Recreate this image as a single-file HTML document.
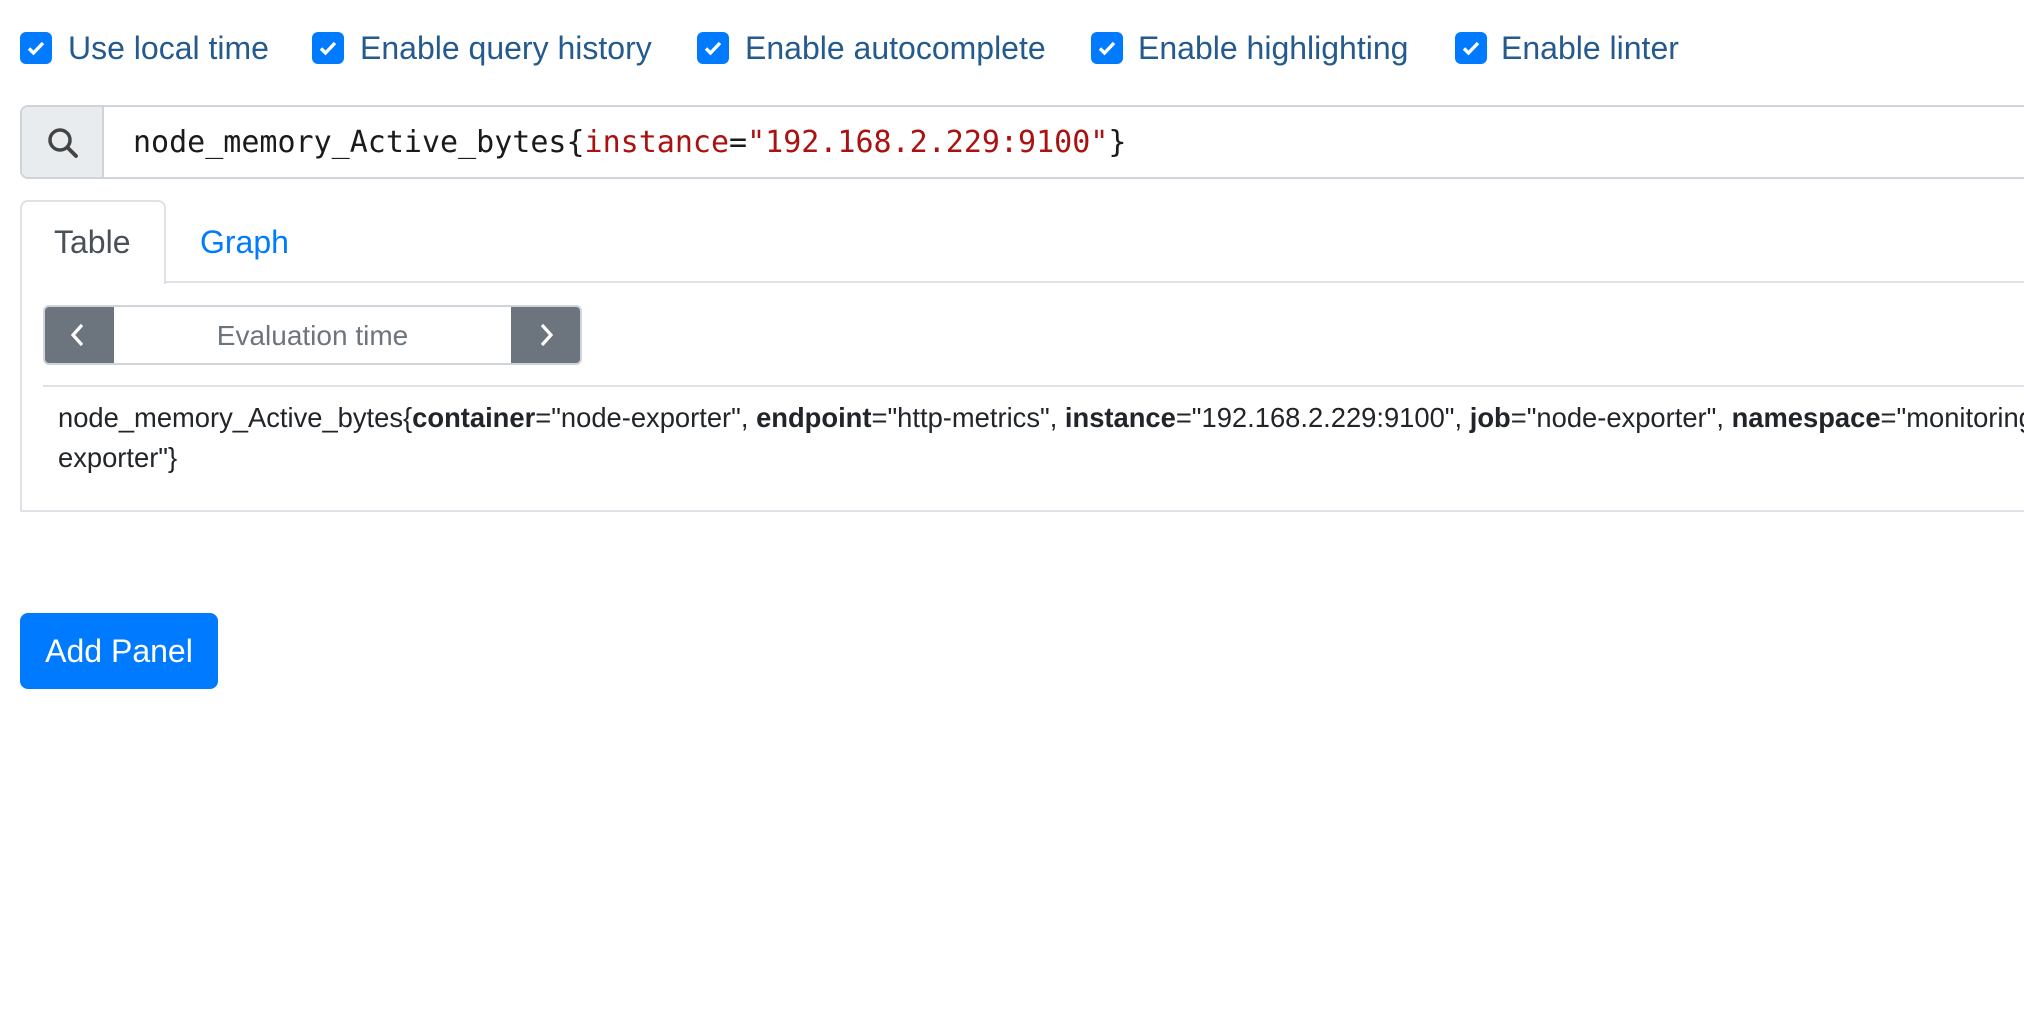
<!DOCTYPE html>
<html style="overflow:hidden"><head><meta charset="utf-8"><style>
*{box-sizing:border-box;margin:0;padding:0}
body{width:2024px;height:1016px;background:#fff;font-family:"Liberation Sans",Arial,sans-serif;position:relative;overflow:hidden}
.cb{position:absolute;top:32px;width:32px;height:32px;background:#007bff;border-radius:6px}
.cb svg{position:absolute;left:7px;top:8px}
.lbl{position:absolute;top:28px;font-size:32px;line-height:40px;color:#245a8e;white-space:nowrap}
.ig{position:absolute;left:20px;top:105px;width:2004px;height:74px;border:2px solid #ced4da;border-right:none;border-radius:8px 0 0 8px;overflow:hidden}
.addon{position:absolute;left:0;top:0;width:82px;height:100%;background:#e9ecef;border-right:2px solid #ced4da}
.q{position:absolute;left:111px;top:16px;font-family:"DejaVu Sans Mono","Liberation Mono",monospace;font-size:30px;line-height:40px;color:#1a1a1a;white-space:nowrap}
.q .r{color:#a11}
.tab{position:absolute;left:20px;top:200px;width:146px;height:84px;border:2px solid #dee2e6;border-bottom:none;border-radius:8px 8px 0 0;background:#fff;z-index:2}
.tabline{position:absolute;left:164px;top:281px;width:1860px;height:2px;background:#dee2e6}
.panel{position:absolute;left:20px;top:281px;width:2004px;height:231px;border-left:2px solid #dee2e6;border-bottom:2px solid #dee2e6}
.tt{position:absolute;top:222px;font-size:32px;line-height:40px;z-index:3}
.eg{position:absolute;left:43px;top:305px;width:539px;height:60px;border:2px solid #ced4da;border-radius:6px;overflow:hidden}
.eb{position:absolute;top:-2px;width:71px;height:60px;background:#6c757d}
.eb svg{position:absolute;left:24px;top:17px}
.et{position:absolute;left:0;width:100%;top:10px;text-align:center;font-size:28px;line-height:38px;color:#6c757d}
.hr{position:absolute;left:43px;top:385px;width:1981px;height:2px;background:#dee2e6}
.res{position:absolute;left:58px;top:398px;width:1966px;overflow:hidden;font-size:27.35px;line-height:40px;color:#212529;white-space:nowrap}
.btn{position:absolute;left:20px;top:613px;width:198px;height:76px;background:#007bff;border-radius:8px;color:#fff;font-size:32px;line-height:76px;text-align:center}
</style></head><body>
<div class="cb" style="left:20px"><svg width="18" height="16" viewBox="0 0 18 16"><path d="M2 8.5l4.5 4.5L16 3" stroke="#fff" stroke-width="3.4" fill="none"/></svg></div>
<div class="lbl" style="left:68px">Use local time</div>
<div class="cb" style="left:312px"><svg width="18" height="16" viewBox="0 0 18 16"><path d="M2 8.5l4.5 4.5L16 3" stroke="#fff" stroke-width="3.4" fill="none"/></svg></div>
<div class="lbl" style="left:360px">Enable query history</div>
<div class="cb" style="left:697px"><svg width="18" height="16" viewBox="0 0 18 16"><path d="M2 8.5l4.5 4.5L16 3" stroke="#fff" stroke-width="3.4" fill="none"/></svg></div>
<div class="lbl" style="left:745px">Enable autocomplete</div>
<div class="cb" style="left:1091px"><svg width="18" height="16" viewBox="0 0 18 16"><path d="M2 8.5l4.5 4.5L16 3" stroke="#fff" stroke-width="3.4" fill="none"/></svg></div>
<div class="lbl" style="left:1138px">Enable highlighting</div>
<div class="cb" style="left:1455px"><svg width="18" height="16" viewBox="0 0 18 16"><path d="M2 8.5l4.5 4.5L16 3" stroke="#fff" stroke-width="3.4" fill="none"/></svg></div>
<div class="lbl" style="left:1501px">Enable linter</div>

<div class="ig"><div class="addon"><svg style="position:absolute;left:24px;top:19px" width="34" height="34" viewBox="0 0 34 34"><circle cx="14" cy="14" r="10" stroke="#444" stroke-width="3.5" fill="none"/><path d="M21.5 21.5L30 30" stroke="#444" stroke-width="3.8" stroke-linecap="round"/></svg></div>
<div class="q">node_memory_Active_bytes{<span class="r">instance</span>=<span class="r">"192.168.2.229:9100"</span>}</div></div>

<div class="panel"></div>
<div class="tabline"></div>
<div class="tab"></div>
<div class="tt" style="left:54px;color:#495057">Table</div>
<div class="tt" style="left:200px;color:#007bff">Graph</div>

<div class="eg"><div class="eb" style="left:-2px"><svg width="22" height="26" viewBox="0 0 22 26"><path d="M15 3L6 13l9 10" stroke="#fff" stroke-width="3.2" fill="none"/></svg></div>
<div class="et">Evaluation time</div>
<div class="eb" style="left:466px"><svg width="22" height="26" viewBox="0 0 22 26"><path d="M7 3l9 10-9 10" stroke="#fff" stroke-width="3.2" fill="none"/></svg></div></div>
<div class="hr"></div>
<div class="res">node_memory_Active_bytes{<b>container</b>="node-exporter", <b>endpoint</b>="http-metrics", <b>instance</b>="192.168.2.229:9100", <b>job</b>="node-exporter", <b>namespace</b>="monitoring", <b>pod</b>="node-<br>exporter"}</div>

<div class="btn">Add Panel</div>
</body></html>
